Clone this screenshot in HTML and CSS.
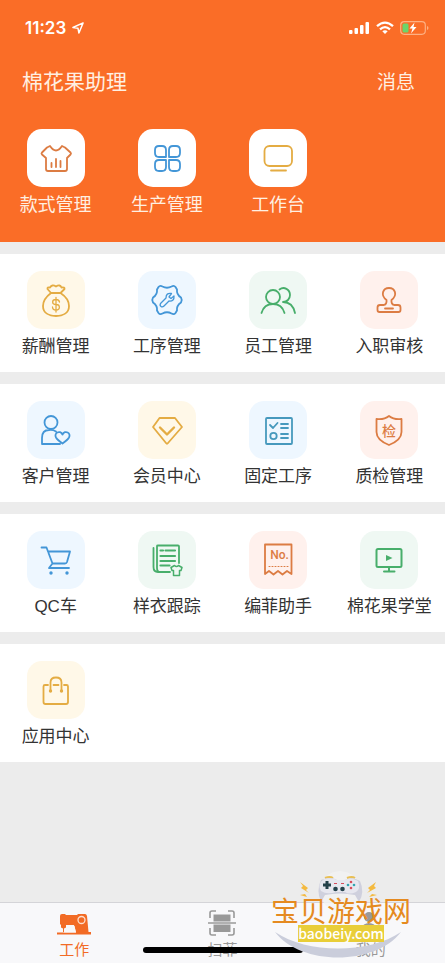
FILE: index.html
```html
<!DOCTYPE html>
<html lang="zh-CN">
<head>
<meta charset="utf-8">
<meta name="viewport" content="width=device-width, initial-scale=1">
<title>棉花果助理</title>
<link rel="stylesheet" href="styles.css">
</head>
<body>
<header class="hero">
  <div class="status">
    <div class="status-left">
      <span class="time">11:23</span>
      <svg width="12" height="12" viewBox="0 0 13 13" fill="none" stroke="currentColor" stroke-width="1.600" stroke-linejoin="round"><path d="M1 6 12 1 7.500 12 6.500 6.800Z"/></svg>
    </div>
    <div class="status-right">
      <svg width="21" height="14" viewBox="0 0 21 14" fill="currentColor"><rect x="0" y="9" width="3.500" height="4" rx="1"/><rect x="5.500" y="7" width="3.500" height="6" rx="1"/><rect x="11" y="4" width="3.500" height="9" rx="1"/><rect x="16.500" y="1" width="3.500" height="12" rx="1"/></svg>
      <svg width="18" height="14" viewBox="0 0 18 14" fill="none" stroke="currentColor" stroke-width="2.300"><path d="M1 5.200Q9-2 17 5.200M4 8.300Q9 3.900 14 8.300"/><path d="M6.300 10.300Q9 8 11.700 10.300L9 13Z" fill="currentColor" stroke="none"/></svg>
      <svg width="29" height="14" viewBox="0 0 29 14"><rect x=".7" y=".7" width="24.600" height="12.600" rx="3.500" fill="none" stroke="#fdb083" stroke-width="1.200"/><path d="M27 5v4q1.500-.5 1.500-2T27 5" fill="#fdb083"/><rect x="2.500" y="2.500" width="6" height="9" rx="1.500" fill="#6bd56b"/><path d="M14.500 1.500 9.500 7.500H12.500L11 12.500 16.500 6H13.500Z" fill="#fff"/></svg>
    </div>
  </div>
  <div class="titlebar">
    <h1>棉花果助理</h1>
    <a href="#messages">消息</a>
  </div>
  <nav class="grid">
    <a class="item" href="#style"><span class="tile rust"><svg viewBox="0 0 58 58"><path d="M23 17Q29 26 35 17L38 18.500 43.500 23.500Q44.500 24.500 43.500 25.500L40 29V40Q40 42 38 42H21Q19 42 19 40V29L15 25.500Q14 24.500 15 23.500L20 18.500Z"/><path d="M24.500 34v4M29 30v8M33.500 32v6"/></svg></span>款式管理</a>
    <a class="item" href="#production"><span class="tile blue"><svg viewBox="0 0 58 58"><path d="M28 28H21Q17 28 17 24V21Q17 17 21 17H24Q28 17 28 21ZM31 28V21Q31 17 35 17H38Q42 17 42 21V24Q42 28 38 28ZM28 31V38Q28 42 24 42H21Q17 42 17 38V35Q17 31 21 31ZM31 31H38Q42 31 42 35V38Q42 42 38 42H35Q31 42 31 38Z"/></svg></span>生产管理</a>
    <a class="item" href="#desk"><span class="tile gold"><svg viewBox="0 0 58 58"><rect x="15.500" y="17" width="27.500" height="20" rx="5"/><path d="M22 41.500H37"/></svg></span>工作台</a>
  </nav>
</header>
<main>
  <section class="grid card">
    <a class="item" href="#pay"><span class="tile gold bg-gold"><svg viewBox="0 0 58 58"><path d="M24 22 20.500 18Q20 16 23 16.500Q25 13 29 15.500Q33 13 34.500 16.500Q38 16 37.500 18L33.500 22M24 22H33.500C38 25 42 30 42 35C42 42 36 45 29 45S16 42 16 35C16 30 20 25 24 22Z"/><path d="M32.500 31Q32 28.500 29 28.500C24.500 28.500 24.500 33.500 29 33.500S33.500 39 29 39Q25.500 39 25.500 36M29 26.500V41" stroke-width="1.300"/></svg></span>薪酬管理</a>
    <a class="item" href="#process"><span class="tile blue bg-blue"><svg viewBox="0 0 58 58"><path d="M20.500 16Q22 14 24.500 15.500Q29 18 33.500 15.500Q36 14 37.500 16L39 18.500C38.500 22.500 40 24.500 43 26.500Q44.500 29 43 31.500C40 33.500 38.500 35.500 39 39.500L37.500 42Q36 44 33.500 42.500Q29 40 24.500 42.500Q22 44 20.500 42L19 39.500C19.500 35.500 18 33.500 15 31.500Q13.500 29 15 26.500C18 24.500 19.500 22.500 19 18.500Z"/><path d="M33.500 22.500Q28 21.500 28 27L22.500 32.500Q21.500 34.500 23 35.500T26 35L31 30Q36.500 30.500 36 25L33 27.500 31 26Z" stroke-width="1.300"/></svg></span>工序管理</a>
    <a class="item" href="#staff"><span class="tile green bg-green"><svg viewBox="0 0 58 58"><circle cx="24" cy="26" r="7"/><path d="M12.500 42Q15 33 24 33T35.500 42M30.500 18.500C35 15 41 18.500 41 24C41 28 38 31 34 31C41 31 44.500 35 46 42"/></svg></span>员工管理</a>
    <a class="item" href="#entry"><span class="tile rust bg-red"><svg viewBox="0 0 58 58"><path d="M26.500 29C20 24 23 17 29 17S38 24 31.500 29Q31 33 34 34H38Q40.500 34 40.500 36.500V39Q40.500 41 38.500 41H19.500Q17.500 41 17.500 39V36.500Q17.500 34 20 34H24Q27 33 26.500 29ZM25 37.500H33"/></svg></span>入职审核</a>
  </section>
  <section class="grid card">
    <a class="item" href="#customers"><span class="tile blue bg-blue"><svg viewBox="0 0 58 58"><circle cx="24" cy="21.500" r="6.500"/><path d="M33 43H15V37Q15 29 22 29Q26 28.500 29 30.500M35.500 33.500C33 28.500 26.500 32 29 36.500Q30.500 39 35.500 42.500Q40.500 39 42 36.500C44.500 32 38 28.500 35.500 33.500Z"/></svg></span>客户管理</a>
    <a class="item" href="#members"><span class="tile gold bg-gold"><svg viewBox="0 0 58 58"><path d="M21.500 17H37Q40 21 44 26L30 42Q29 43.500 28 42L15 26Q18 22 21.500 17Z"/><path d="M22 26.500 29 33.500 36 26.500" stroke-width="2.400"/></svg></span>会员中心</a>
    <a class="item" href="#fixed"><span class="tile teal bg-blue"><svg viewBox="0 0 58 58"><rect x="17" y="17" width="26" height="26" rx="1"/><path d="M21 24 24 27 28.500 22M32 23H39M32 27H39M32 33H39M32 37H39"/><circle cx="24.500" cy="35" r="3.200"/></svg></span>固定工序</a>
    <a class="item" href="#quality"><span class="tile rust bg-red"><svg viewBox="0 0 58 58"><path d="M29 15Q34 19 41.500 18V31Q41.500 39 29 44Q16.500 39 16.500 31V18Q24 19 29 15Z"/><text x="29" y="35" font-size="14">检</text></svg></span>质检管理</a>
  </section>
  <section class="grid card">
    <a class="item" href="#qc"><span class="tile blue bg-blue"><svg viewBox="0 0 58 58"><path d="M14.500 16.500H19.500L21 20.500 25.500 32.500 22 37H42M21 20.500H43L40 31Q39.500 32.500 38 32.500H25.500"/><circle cx="24" cy="42" r="1.700" class="solid"/><circle cx="40" cy="42" r="1.700" class="solid"/></svg></span>QC车</a>
    <a class="item" href="#samples"><span class="tile green bg-green"><svg viewBox="0 0 58 58"><path d="M15.500 17V36Q15.500 41 20 41H32M19 37V15Q19 14.500 20 14.500H40Q41 14.500 41 15.500V32M19 37Q19 41 22 41"/><path d="M22.500 19.500H25M27.500 19.500H37M22.500 25H37M22.500 30H37M22.500 34.500H31.500" stroke-width="2.200"/><path d="M36.500 34.500Q38.500 36.500 40.500 34.500L44 36.500 43 39.500H41.500V44.500H35.500V39.500H34L33 36.500Z" stroke-width="1.500"/></svg></span>样衣跟踪</a>
    <a class="item" href="#ticket"><span class="tile rust bg-red"><svg viewBox="0 0 58 58"><path d="M16 43V13.500H42.500V43L38 40 33.500 43.500 29 40 24.500 43.500 20 40Z"/><path d="M20 35.500H39" stroke-width="1" stroke-dasharray="1 2"/><text x="30.500" y="28" font-size="12" class="latin">No.</text></svg></span>编菲助手</a>
    <a class="item" href="#school"><span class="tile green bg-green"><svg viewBox="0 0 58 58"><rect x="16.500" y="18" width="25" height="18" rx="1.500" stroke-width="2"/><path d="M29 36V40M24 40.500H34.500" stroke-width="2"/><path d="M26 24V30L32.500 27Z" class="solid"/></svg></span>棉花果学堂</a>
  </section>
  <section class="grid card">
    <a class="item" href="#apps"><span class="tile gold bg-gold"><svg viewBox="0 0 58 58"><path d="M21 24H18Q16.500 24 16.500 25.500V41Q16.500 43 18.500 43H39Q41 43 41 41V25.500Q41 24 39.500 24H37M26.500 24H31.500M23.500 30V21.500Q23.500 16.500 29 16.500T34.500 21.500V30"/><circle cx="23.500" cy="30" r="1.700" class="solid"/><circle cx="34.500" cy="30" r="1.700" class="solid"/></svg></span>应用中心</a>
  </section>
</main>
<footer class="tabs">
  <a class="tab active" href="#work"><svg width="34" height="26" viewBox="0 0 34 26"><path d="M3 6Q3 4 5 4H8L9 5H20L21 4H28Q29.500 4 30 6L31.500 22H34V24.500H0V22.500H19L17 15H9V17.500L7 18.500V22H6V18.500L4 17.500V15L3 14Z" fill="currentColor"/><path d="M10 16H17.500L19 22.500H7Z" fill="#f8f8fa"/><circle cx="24.500" cy="10" r="3.500" fill="none" stroke="#fde0cf" stroke-width="1.300"/></svg>工作</a>
  <a class="tab" href="#scan"><svg width="28" height="26" viewBox="0 0 28 26"><path d="M2 8V3Q2 1 4 1H8M20 1H24Q26 1 26 3V8M2 18V23Q2 25 4 25H8M20 25H24Q26 25 26 23V18M0 13H28" fill="none" stroke="currentColor" stroke-width="1.600"/><path d="M5.500 4.500H22.500V11.500H5.500ZM5.500 14.500H22.500V22H5.500Z" fill="currentColor"/></svg>扫菲</a>
  <a class="tab" href="#me"><svg width="26" height="26" viewBox="0 0 26 26"><circle cx="11" cy="7" r="5" fill="currentColor"/><path d="M3 19Q5 13 11 13T19 19Z" fill="currentColor"/></svg>我的</a>
  <div class="home-bar"></div>
  <div class="mark">
    <svg class="pad" viewBox="0 0 140 90">
      <circle cx="69" cy="21" r="20" fill="#f3f3f3" opacity=".8"/>
      <path d="M4 62C36 84 98 84 130 62C104 96 30 96 4 62Z" fill="#cacddb"/>
      <path d="M54 8q5-2 8 0M76 8q5-2 8 0" fill="none" stroke="#e8bf55" stroke-width="2"/>
      <path d="M50 10Q60 6 66 10H74Q81 6 89 11Q94 22 88 32L84 25Q69 22 54 25L50 32Q45 20 50 10Z" fill="#cfd0dd"/>
      <path d="M53 9Q61 7 66 10H73Q80 7 87 11Q90 19 85 22Q78 25 74 22H65Q56 25 50 21Q46 14 53 9Z" fill="#e7e7ef"/>
      <path d="M56 11v8M52 15h8" stroke="#24414b" stroke-width="3"/>
      <g fill="#24414b"><circle cx="64.500" cy="19" r="2.300"/><circle cx="71.500" cy="19" r="2.300"/></g>
      <g fill="#d74b5b"><circle cx="80" cy="12" r="1.300"/><circle cx="80" cy="18" r="1.300"/><path d="M63 13h3v1h-3zM70 13h3v1h-3z"/></g>
      <g fill="#32a5b2"><circle cx="77" cy="15" r="1.300"/><circle cx="83" cy="15" r="1.300"/></g>
      <path d="M29 12 37 18 35 20 38 23 30 18 32 16ZM105 12 97 18 99 20 96 23 105 18 103 16ZM29 25 34 24 36 27ZM106 25 101 24 98 27Z" fill="#f4ba3f"/>
    </svg>
    <strong>宝贝游戏网</strong>
    <span>baobeiy.com</span>
  </div>
</footer>
</body>
</html>
```

FILE: styles.css
```css
* {
  box-sizing: border-box;
}

body {
  margin: 0;
  min-height: 100vh;
  display: flex;
  flex-direction: column;
  background: #ececec;
  color: #333;
  font-family: "Noto Sans CJK SC", sans-serif;
}

a {
  color: inherit;
  text-decoration: none;
}

.hero {
  padding-bottom: 25px;
  background: #fa6d27;
  color: #fff0e2;
}

.status {
  display: flex;
  justify-content: space-between;
  align-items: center;
  padding: 16px 16px 0 25px;
  height: 40px;
  color: #fff;
}

.status-left,
.status-right {
  display: flex;
  align-items: center;
  gap: 6px;
}

.time {
  font: 600 17px/24px Inter, sans-serif;
}

.titlebar {
  display: flex;
  justify-content: space-between;
  align-items: center;
  height: 56px;
  margin: 12px 30px 21px 22px;
  font-size: 19px;
}

.titlebar h1 {
  margin: 0;
  font-size: 21px;
  font-weight: 400;
}

.grid {
  display: grid;
  grid-template-columns: repeat(4, 1fr);
}

.item {
  display: flex;
  flex-direction: column;
  align-items: center;
  gap: 6px;
  font-family: "Liberation Sans", "Noto Sans CJK SC", sans-serif;
  font-size: 17px;
  line-height: 24px;
  white-space: nowrap;
}

.hero .item {
  font-size: 18px;
}

.card {
  margin-top: 12px;
  padding: 17px 0 13px;
  background: #fff;
}

.tile {
  width: 58px;
  height: 58px;
  border-radius: 15px;
  background: #fff;
}

.tile svg {
  display: block;
  fill: none;
  stroke: currentColor;
  stroke-width: 1.8px;
  stroke-linecap: round;
  stroke-linejoin: round;
}

.tile .solid,
.tile text {
  fill: currentColor;
  stroke: none;
}

.tile text {
  text-anchor: middle;
  font-weight: 500;
}

.tile .latin {
  font-family: Roboto, sans-serif;
}

.rust { color: #dc7c43; }
.blue { color: #4396d7; }
.gold { color: #e4ac43; }
.green { color: #48ae6b; }
.teal { color: #4699bd; }

.bg-gold { background: #fff8e8; }
.bg-blue { background: #eef7ff; }
.bg-green { background: #eff8f3; }
.bg-red { background: #fff1ed; }

main {
  flex: 1;
}

.tabs {
  position: relative;
  display: grid;
  grid-template-columns: repeat(3, 1fr);
  padding: 7px 0 4px;
  border-top: 1px solid #d4d4d8;
  background: #f8f8fa;
}

.tab {
  display: flex;
  flex-direction: column;
  align-items: center;
  gap: 3px;
  color: #999;
  font-size: 15px;
  line-height: 20px;
}

.tab.active {
  color: #f26b25;
}

.home-bar {
  position: absolute;
  bottom: 10px;
  left: 50%;
  width: 160px;
  height: 6px;
  margin-left: -80px;
  border-radius: 3px;
  background: #000;
}

.mark {
  position: absolute;
  right: 34px;
  bottom: 3px;
  width: 140px;
  height: 90px;
  display: flex;
  flex-direction: column;
  align-items: center;
  padding-top: 26px;
}

.pad {
  position: absolute;
  inset: 0;
}

.mark strong,
.mark span {
  position: relative;
  white-space: nowrap;
}

.mark strong {
  color: #e58a20;
  font-size: 28px;
  font-weight: 400;
  line-height: 29px;
}

.mark span {
  width: 86px;
  background: #e9ce38;
  color: #fff;
  font-size: 14px;
  font-weight: 500;
  line-height: 17px;
  text-align: center;
}
```
